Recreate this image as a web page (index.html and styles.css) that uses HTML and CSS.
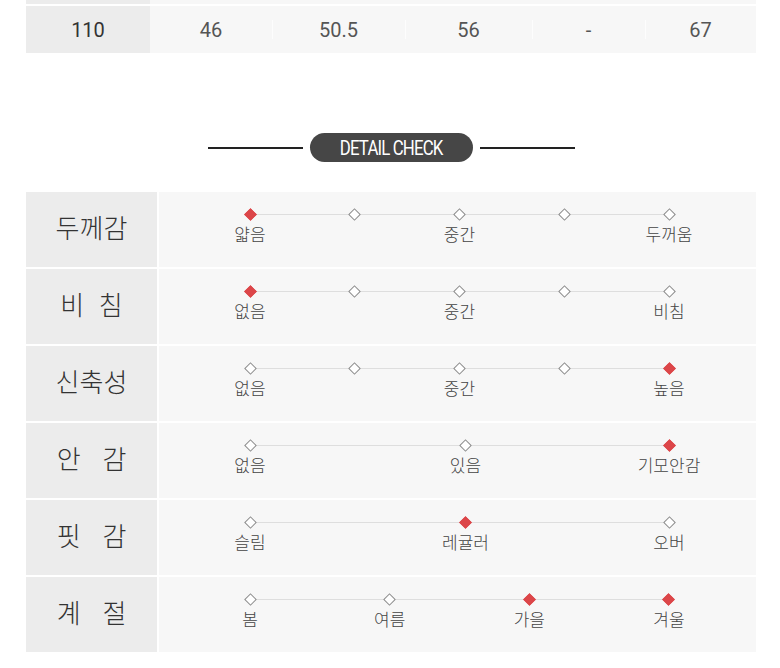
FILE: index.html
```html
<!DOCTYPE html>
<html lang="ko">
<head>
<meta charset="utf-8">
<link rel="stylesheet" href="styles.css">
</head>
<body>
<div class="page">
  <div class="size-table">
    <div class="size-row stub">
      <div class="cell head"></div><div class="cell"></div><div class="cell"></div><div class="cell"></div><div class="cell"></div><div class="cell"></div>
    </div>
    <div class="size-row">
      <div class="cell head">110</div>
      <div class="cell">46</div>
      <div class="cell sep">50.5</div>
      <div class="cell sep">56</div>
      <div class="cell sep">-</div>
      <div class="cell sep">67</div>
    </div>
  </div>

  <div class="title">
    <span class="rule"></span>
    <span class="pill"><span class="pill-text">DETAIL CHECK</span></span>
    <span class="rule"></span>
  </div>

  <div class="detail">
    <div class="label">두께감</div>
    <div class="content">
      <div class="track">
        <div class="pt on"><i></i><span>얇음</span></div>
        <div class="pt"><i></i></div>
        <div class="pt"><i></i><span>중간</span></div>
        <div class="pt"><i></i></div>
        <div class="pt"><i></i><span>두꺼움</span></div>
      </div>
    </div>

    <div class="label">비&nbsp;&nbsp;침</div>
    <div class="content">
      <div class="track">
        <div class="pt on"><i></i><span>없음</span></div>
        <div class="pt"><i></i></div>
        <div class="pt"><i></i><span>중간</span></div>
        <div class="pt"><i></i></div>
        <div class="pt"><i></i><span>비침</span></div>
      </div>
    </div>

    <div class="label">신축성</div>
    <div class="content">
      <div class="track">
        <div class="pt"><i></i><span>없음</span></div>
        <div class="pt"><i></i></div>
        <div class="pt"><i></i><span>중간</span></div>
        <div class="pt"><i></i></div>
        <div class="pt on"><i></i><span>높음</span></div>
      </div>
    </div>

    <div class="label">안&nbsp;&nbsp;&nbsp;감</div>
    <div class="content">
      <div class="track three">
        <div class="pt"><i></i><span>없음</span></div>
        <div class="pt"><i></i><span>있음</span></div>
        <div class="pt on"><i></i><span>기모안감</span></div>
      </div>
    </div>

    <div class="label">핏&nbsp;&nbsp;&nbsp;감</div>
    <div class="content">
      <div class="track three">
        <div class="pt"><i></i><span>슬림</span></div>
        <div class="pt on"><i></i><span>레귤러</span></div>
        <div class="pt"><i></i><span>오버</span></div>
      </div>
    </div>

    <div class="label">계&nbsp;&nbsp;&nbsp;절</div>
    <div class="content">
      <div class="track">
        <div class="pt"><i></i><span>봄</span></div>
        <div class="pt"><i></i><span>여름</span></div>
        <div class="pt on"><i></i><span>가을</span></div>
        <div class="pt on"><i></i><span>겨울</span></div>
      </div>
    </div>
  </div>
</div>
</body>
</html>
```

FILE: styles.css
```css
* { box-sizing: border-box; }
html, body { margin: 0; padding: 0; background: #fff; }
body {
  font-family: "Noto Sans CJK KR", "Noto Sans", sans-serif;
  font-weight: 300;
  color: #333;
}
.page {
  width: 780px;
  padding: 0 24px 0 26px;
}

/* size table */
.size-table {
  width: 730px;
  display: flex;
  flex-direction: column;
  gap: 2px;
}
.size-row {
  display: grid;
  grid-template-columns: 124px 122px 133px 127px 113px 111px;
  height: 47px;
  background: #f7f7f7;
}
.size-row.stub { height: 4px; }
.cell {
  position: relative;
  display: flex;
  align-items: center;
  justify-content: center;
  font-family: "Roboto", "Noto Sans", sans-serif;
  font-weight: 400;
  font-size: 20px;
  color: #555;
  line-height: 1;
}
.cell.head {
  background: #ececec;
  color: #333;
}
.cell.sep::before {
  content: "";
  position: absolute;
  left: 0;
  top: 14px;
  height: 19px;
  width: 1px;
  background: #fdfdfd;
}

/* title */
.title {
  width: 730px;
  margin-top: 80px;
  display: flex;
  align-items: center;
  justify-content: center;
  gap: 7px;
  height: 29px;
}
.rule {
  width: 95px;
  height: 2px;
  background: #222;
}
.pill {
  width: 163px;
  height: 29px;
  border-radius: 15px;
  background: #464646;
  display: flex;
  align-items: center;
  justify-content: center;
}
.pill-text {
  display: inline-block;
  color: #fff;
  font-family: "Roboto", "Noto Sans", sans-serif;
  font-weight: 400;
  font-size: 20px;
  line-height: 1;
  letter-spacing: -1px;
  transform: scaleX(0.84);
  white-space: nowrap;
}

/* detail table */
.detail {
  width: 730px;
  margin-top: 30px;
  display: grid;
  grid-template-columns: 131px 1fr;
  grid-auto-rows: 75px;
  column-gap: 2px;
  row-gap: 2px;
}
.label {
  background: #ececec;
  display: flex;
  align-items: center;
  justify-content: center;
  font-size: 26px;
  color: #333;
  line-height: 1;
  padding-bottom: 5px;
  white-space: nowrap;
}
.content {
  background: #f7f7f7;
  padding: 16px 87px 0 91px;
}
.track {
  position: relative;
  display: flex;
  justify-content: space-between;
}
.track.three .pt:nth-child(2) { margin-left: 12px; }
.track::before {
  content: "";
  position: absolute;
  left: 0;
  right: 0;
  top: 6px;
  height: 1px;
  background: #dedede;
}
.pt {
  position: relative;
  width: 0;
  display: flex;
  flex-direction: column;
  align-items: center;
}
.pt i {
  display: block;
  width: 9px;
  height: 9px;
  margin-top: 1.5px;
  margin-bottom: 1.5px;
  background: #fff;
  border: 1px solid #8a8a8a;
  transform: rotate(45deg);
  flex: none;
}
.pt.on i {
  background: #dc4649;
  border-color: #dc4649;
}
.pt span {
  display: block;
  margin-top: 4px;
  font-size: 17px;
  line-height: 20px;
  color: #444;
  white-space: nowrap;
}
```
